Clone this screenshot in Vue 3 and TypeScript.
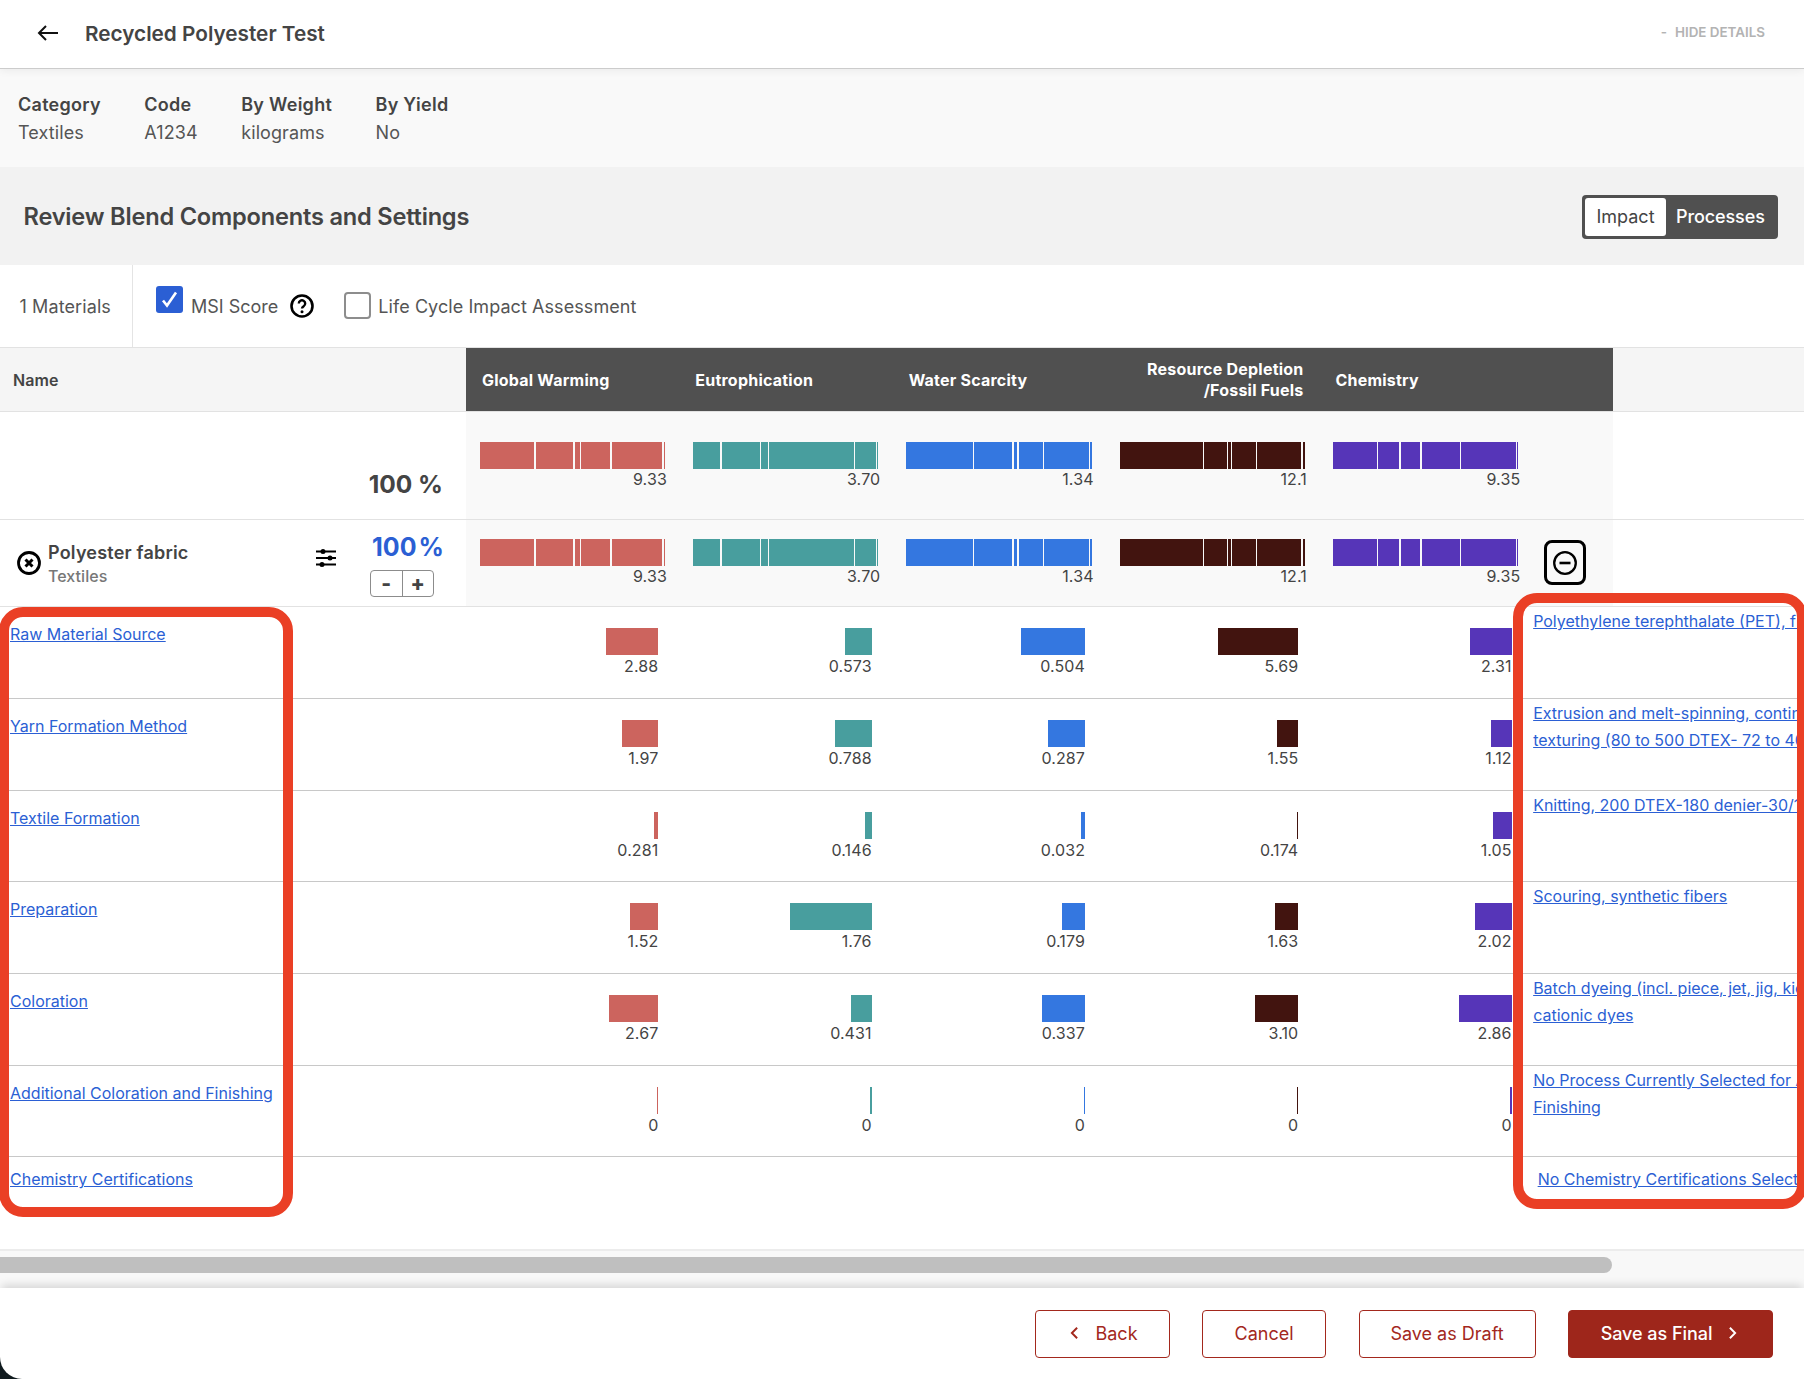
<script setup lang="ts">
type Seg = [number, number]
interface Metric {
  title: string
  stack: Seg[]
  start: number
  total: string
  color: string
  parts: { w: number; v: string }[]
}

const metrics: Metric[] = [
  {
    title: 'Global Warming', start: 480, total: '9.33', color: '#cc645e',
    stack: [[480, 534], [536, 573], [575, 580], [581, 610], [612, 662], [664, 665]],
    parts: [{ w: 52, v: '2.88' }, { w: 36, v: '1.97' }, { w: 4.5, v: '0.281' }, { w: 28, v: '1.52' }, { w: 49, v: '2.67' }, { w: 1, v: '0' }],
  },
  {
    title: 'Eutrophication', start: 693.33, total: '3.70', color: '#489e9e',
    stack: [[692.5, 720], [722, 760], [761, 768], [769, 854], [855, 876], [877, 878]],
    parts: [{ w: 27, v: '0.573' }, { w: 37, v: '0.788' }, { w: 7, v: '0.146' }, { w: 82, v: '1.76' }, { w: 21, v: '0.431' }, { w: 2, v: '0' }],
  },
  {
    title: 'Water Scarcity', start: 906.66, total: '1.34', color: '#3477e0',
    stack: [[905.6, 973], [974, 1012], [1014, 1017], [1019, 1043], [1044, 1089], [1090, 1092]],
    parts: [{ w: 64, v: '0.504' }, { w: 37, v: '0.287' }, { w: 4, v: '0.032' }, { w: 23, v: '0.179' }, { w: 43, v: '0.337' }, { w: 1, v: '0' }],
  },
  {
    title: 'Resource Depletion /Fossil Fuels', start: 1120, total: '12.1', color: '#42140f',
    stack: [[1120, 1203], [1204, 1227], [1228, 1231], [1232, 1256], [1257, 1301.5], [1303.5, 1305]],
    parts: [{ w: 80, v: '5.69' }, { w: 21, v: '1.55' }, { w: 1.5, v: '0.174' }, { w: 23, v: '1.63' }, { w: 43, v: '3.10' }, { w: 1, v: '0' }],
  },
  {
    title: 'Chemistry', start: 1333.33, total: '9.35', color: '#5635b8',
    stack: [[1333, 1377], [1378, 1399], [1401, 1420], [1422, 1460], [1461, 1516], [1517, 1518]],
    parts: [{ w: 42, v: '2.31' }, { w: 21, v: '1.12' }, { w: 19, v: '1.05' }, { w: 37, v: '2.02' }, { w: 53, v: '2.86' }, { w: 2, v: '0' }],
  },
]

const processes: { name: string; lines: string[] }[] = [
  { name: 'Raw Material Source', lines: ['Polyethylene terephthalate (PET), fibers'] },
  { name: 'Yarn Formation Method', lines: ['Extrusion and melt-spinning, continuous', 'texturing (80 to 500 DTEX- 72 to 400'] },
  { name: 'Textile Formation', lines: ['Knitting, 200 DTEX-180 denier-30/1'] },
  { name: 'Preparation', lines: ['Scouring, synthetic fibers'] },
  { name: 'Coloration', lines: ['Batch dyeing (incl. piece, jet, jig, kier)', 'cationic dyes'] },
  { name: 'Additional Coloration and Finishing', lines: ['No Process Currently Selected for Additional', 'Finishing'] },
]

const info = [
  { label: 'Category', value: 'Textiles' },
  { label: 'Code', value: 'A1234' },
  { label: 'By Weight', value: 'kilograms' },
  { label: 'By Yield', value: 'No' },
]

function segStyle(m: Metric, i: number) {
  const [a, b] = m.stack[i]
  const prev = i === 0 ? m.start : m.stack[i - 1][1]
  return { width: `${b - a}px`, marginLeft: `${a - prev}px`, background: m.color }
}
</script>

<template>
  <div class="page">
    <header class="topbar">
      <svg class="back" viewBox="0 0 22 18" width="22" height="18" fill="none" stroke="#111" stroke-width="2">
        <path d="M21 9H2M9 2 2 9l7 7" />
      </svg>
      <h1 class="title">Recycled Polyester Test</h1>
      <span class="hide"><span class="dash">-</span>HIDE DETAILS</span>
    </header>

    <section class="details">
      <div v-for="d in info" :key="d.label" class="detail">
        <strong>{{ d.label }}</strong>
        <span>{{ d.value }}</span>
      </div>
    </section>

    <section class="review">
      <h2>Review Blend Components and Settings</h2>
      <div class="toggle">
        <span class="on">Impact</span>
        <span class="off">Processes</span>
      </div>
    </section>

    <section class="toolbar">
      <div class="count">1 Materials</div>
      <div class="checks">
        <span class="box checked">
          <svg viewBox="0 0 27 27" width="27" height="27" fill="none" stroke="#fff" stroke-width="2.6">
            <path d="M7 14.500l4 5 9-13" />
          </svg>
        </span>
        <span class="msi">MSI Score</span>
        <svg class="help" viewBox="0 0 24 24" width="24" height="24" fill="none" stroke="#000" stroke-width="2.600">
          <circle cx="12" cy="12" r="10.500" />
          <path d="M8.800 9.500a3.200 3.200 0 1 1 4.900 2.700c-1.100.7-1.700 1.300-1.700 2.400" stroke-width="2.400" />
          <circle cx="12" cy="17.800" r="1.500" fill="#000" stroke="none" />
        </svg>
        <span class="box empty"></span>
        <span class="lca">Life Cycle Impact Assessment</span>
      </div>
    </section>

    <section class="table">
      <div class="thead">
        <div class="name-h">Name</div>
        <div class="dark">
          <div class="mh">Global Warming</div>
          <div class="mh">Eutrophication</div>
          <div class="mh">Water Scarcity</div>
          <div class="mh right">Resource Depletion<br />/Fossil Fuels</div>
          <div class="mh">Chemistry</div>
        </div>
      </div>

      <div class="row total">
        <div class="lead"><span class="pct">100 %</span></div>
        <div class="shade">
          <div v-for="m in metrics" :key="m.title" class="mcell">
            <div class="stack">
              <i v-for="(s, i) in m.stack" :key="i" :style="segStyle(m, i)"></i>
            </div>
            <div class="val">{{ m.total }}</div>
          </div>
        </div>
      </div>

      <div class="row material">
        <div class="lead">
          <svg class="remove" viewBox="0 0 24 24" width="24" height="24" fill="none" stroke="#000" stroke-width="2.800">
            <circle cx="12" cy="12" r="10.500" />
            <path d="M8.500 8.500l7 7M15.500 8.500l-7 7" stroke-width="3" />
          </svg>
          <div class="mat">
            <strong>Polyester fabric</strong>
            <span>Textiles</span>
          </div>
          <svg class="sliders" viewBox="0 0 20 20" width="20" height="20" fill="#000" stroke="#000">
            <path d="M0 3.500h20M0 10h20M0 16.500h20" stroke-width="2" />
            <circle cx="7" cy="3.500" r="2.500" stroke="none" />
            <circle cx="14" cy="10" r="2.500" stroke="none" />
            <circle cx="6" cy="16.500" r="2.500" stroke="none" />
          </svg>
          <div class="mix">
            <span class="blue">100<em>%</em></span>
            <div class="stepper"><b>-</b><b>+</b></div>
          </div>
        </div>
        <div class="shade">
          <div v-for="m in metrics" :key="m.title" class="mcell">
            <div class="stack">
              <i v-for="(s, i) in m.stack" :key="i" :style="segStyle(m, i)"></i>
            </div>
            <div class="val">{{ m.total }}</div>
          </div>
          <button class="minus" type="button" aria-label="Remove">
            <svg viewBox="0 0 24 24" width="24" height="24" fill="none" stroke="#000" stroke-width="2.300">
              <circle cx="12" cy="12" r="10.800" />
              <path d="M6.500 12h11" stroke-width="2.600" />
            </svg>
          </button>
        </div>
      </div>

      <div v-for="(p, r) in processes" :key="p.name" class="row proc">
        <div class="lead"><a class="link" href="#">{{ p.name }}</a></div>
        <div v-for="m in metrics" :key="m.title" class="pcell">
          <div class="pbar" :style="{ width: m.parts[r].w + 'px', background: m.color }"></div>
          <div class="pval">{{ m.parts[r].v }}</div>
        </div>
        <div class="procs">
          <a v-for="l in p.lines" :key="l" class="link" href="#">{{ l }}</a>
        </div>
      </div>

      <div class="row proc last">
        <div class="lead"><a class="link" href="#">Chemistry Certifications</a></div>
        <div class="procs cert"><a class="link" href="#">No Chemistry Certifications Selected</a></div>
      </div>

      <div class="scroller"><div class="thumb"></div></div>
    </section>

    <footer class="footer">
      <button class="btn back-btn" type="button">
        <svg viewBox="0 0 10 16" width="9" height="14" fill="none" stroke="currentColor" stroke-width="2.200"><path d="M8 2 2 8l6 6" /></svg>
        Back
      </button>
      <button class="btn cancel" type="button">Cancel</button>
      <button class="btn draft" type="button">Save as Draft</button>
      <button class="btn final" type="button">
        Save as Final
        <svg viewBox="0 0 10 16" width="9" height="14" fill="none" stroke="currentColor" stroke-width="2.200"><path d="M2 2l6 6-6 6" /></svg>
      </button>
    </footer>

    <div class="mark mark-left"></div>
    <div class="mark mark-right"></div>
  </div>
</template>

<style scoped>
.page {
  position: relative;
  width: 1804px;
  height: 1379px;
  overflow: hidden;
  background: #111b1f;
  font-family: Inter, "Liberation Sans", sans-serif;
  color: #444;
  display: flex;
  flex-direction: column;
}
.topbar {
  position: relative;
  z-index: 2;
  height: 69px;
  flex: none;
  box-sizing: border-box;
  background: #fff;
  border-bottom: 1px solid #ccc;
  box-shadow: 0 2px 8px rgba(0, 0, 0, 0.06);
  display: flex;
  align-items: center;
  padding: 0 39px 2px 37px;
}
.title {
  margin: 0 0 0 26px;
  font-size: 20.750px;
  font-weight: 600;
  color: #444;
}
.hide {
  margin-left: auto;
  font-size: 13.400px;
  font-weight: 600;
  color: #b3b3b3;
  margin-top: -3px;
}
.dash { margin-right: 8px; }
.details {
  height: 98px;
  flex: none;
  background: #f9f9f9;
  display: flex;
  box-sizing: border-box;
  padding: 22px 0 0 18px;
  gap: 43.500px;
}
.detail {
  display: flex;
  flex-direction: column;
  font-size: 18px;
  line-height: 28px;
}
.detail strong { font-weight: 600; letter-spacing: 0.27px; }
.detail span { color: #555; letter-spacing: 0.1px; }
.review {
  height: 98px;
  flex: none;
  box-sizing: border-box;
  background: #f2f2f2;
  display: flex;
  align-items: center;
  justify-content: space-between;
  padding: 2px 26px 0 23.500px;
}
.review h2 {
  margin: -2px 0 0;
  font-size: 23.600px;
  font-weight: 600;
  color: #444;
  letter-spacing: -0.2px;
}
.toggle {
  width: 196px;
  height: 44px;
  box-sizing: border-box;
  padding: 3px;
  background: #505050;
  border-radius: 4px;
  display: flex;
  align-items: center;
  font-size: 18px;
}
.on {
  width: 81px;
  height: 38px;
  box-sizing: border-box;
  padding-bottom: 2px;
  background: #fff;
  border-radius: 3px;
  color: #444;
  display: flex;
  align-items: center;
  justify-content: center;
}
.off { color: #fff; margin: 0 0 2px 10px; font-weight: 500; letter-spacing: -0.1px; }
.toolbar {
  height: 82px;
  flex: none;
  background: #fff;
  display: flex;
  font-size: 18px;
}
.count {
  width: 133px;
  box-sizing: border-box;
  border-right: 1px solid #e4e4e4;
  padding: 31px 0 0 19.500px;
  color: #555;
  letter-spacing: 0.1px;
}
.checks {
  display: flex;
  align-items: flex-start;
  padding-left: 23px;
  color: #555;
}
.box {
  display: block;
  width: 27px;
  height: 27px;
  box-sizing: border-box;
  border-radius: 3px;
  flex: none;
}
.checked { background: #2b5fd4; margin-top: 21px; }
.checked svg { display: block; }
.empty { border: 2px solid #8d8d8d; margin: 27px 0 0 30px; border-radius: 4px; }
.msi { margin: 31px 0 0 8px; }
.help { margin: 29px 0 0 12px; flex: none; }
.lca { margin: 31px 0 0 7px; letter-spacing: 0.07px; }
.table {
  flex: 1;
  min-height: 0;
  background: #fff;
  border-top: 1px solid #e2e2e2;
  display: flex;
  flex-direction: column;
}
.thead {
  height: 63px;
  flex: none;
  background: #f5f5f5;
  border-bottom: 1px solid #e2e2e2;
  display: flex;
}
.name-h {
  width: 466px;
  flex: none;
  box-sizing: border-box;
  padding: 22px 0 0 13px;
  font-size: 16px;
  font-weight: 600;
  letter-spacing: 0.1px;
  color: #444;
}
.dark {
  width: 1147px;
  background: #505050;
  color: #fff;
  display: flex;
  align-items: center;
  font-size: 16px;
  font-weight: 700;
  line-height: 21px;
  letter-spacing: 0.22px;
}
.mh {
  width: 213.330px;
  flex: none;
  box-sizing: border-box;
  padding: 2px 0 0 16px;
}
.mh.right {
  text-align: right;
  padding: 0 16px 0 0;
  width: 197.500px;
  margin-left: 16px;
}
.row {
  display: flex;
  flex: none;
  box-sizing: border-box;
}
.lead {
  width: 466px;
  flex: none;
  box-sizing: border-box;
}
.total { height: 108px; border-bottom: 1px solid #e2e2e2; }
.total .lead {
  display: flex;
  justify-content: flex-end;
  padding: 53px 23px 0 0;
}
.pct {
  font-size: 24.500px;
  font-weight: 700;
  line-height: 38px;
  color: #444;
}
.shade {
  position: relative;
  width: 1147px;
  background: #f9f9f9;
  display: flex;
}
.mcell {
  width: 213.330px;
  flex: none;
  box-sizing: border-box;
  padding: 30px 0 0 14px;
  position: relative;
}
.stack {
  display: flex;
  height: 27px;
}
.stack i { display: block; flex: none; }
.val {
  width: 187px;
  text-align: right;
  font-size: 16px;
  line-height: 21px;
  color: #444;
  letter-spacing: 0.15px;
}
.material { height: 87.200px; border-bottom: 1px solid #e2e2e2; }
.material .lead {
  display: flex;
  position: relative;
  padding-left: 17px;
}
.material .mcell { padding-top: 19px; }
.remove { margin-top: 31px; flex: none; }
.mat {
  display: flex;
  flex-direction: column;
  width: 268px;
  flex: none;
  margin-left: 7px;
  padding-top: 20px;
}
.mat strong {
  font-size: 18px;
  line-height: 26px;
  font-weight: 600;
  letter-spacing: 0.2px;
  color: #444;
}
.mat span {
  font-size: 16px;
  line-height: 21px;
  font-weight: 500;
  letter-spacing: 0.05px;
  color: #777;
}
.sliders { margin-top: 28px; flex: none; }
.mix {
  margin-left: 34px;
  display: flex;
  flex-direction: column;
  padding-top: 8px;
}
.blue {
  color: #2b5fd4;
  font-size: 25px;
  font-weight: 700;
  line-height: 38px;
  padding-left: 2px;
}
.blue em { font-style: normal; margin-left: 2px; }
.stepper {
  width: 64px;
  height: 27px;
  box-sizing: border-box;
  border: 1px solid #8c8c8c;
  border-radius: 4px;
  margin-top: 4px;
  display: flex;
  background: #fff;
}
.stepper b {
  flex: 1;
  display: flex;
  align-items: center;
  justify-content: center;
  font-size: 21px;
  font-weight: 800;
  line-height: 1;
  color: #444;
}
.stepper b + b { border-left: 1px solid #8c8c8c; }
.minus {
  position: absolute;
  left: 1078px;
  top: 20px;
  width: 42px;
  height: 45px;
  box-sizing: border-box;
  padding: 0;
  background: #f9f9f9;
  border: 3px solid #000;
  border-radius: 8px;
  display: flex;
  align-items: center;
  justify-content: center;
}
.proc { height: 91.700px; border-bottom: 1px solid #c8c8c8; background: #fff; }
.proc .lead { padding: 15px 0 0 10px; }
.last .lead { padding-top: 10px; }
.link {
  color: #2b5fd4;
  font-size: 16px;
  line-height: 24px;
  text-decoration: underline;
  white-space: nowrap;
}
.pcell {
  width: 213.330px;
  flex: none;
  box-sizing: border-box;
  padding: 21px 21px 0 0;
  display: flex;
  flex-direction: column;
  align-items: flex-end;
}
.pbar { height: 27px; flex: none; }
.pval {
  font-size: 16px;
  line-height: 22px;
  color: #444;
  letter-spacing: 0.1px;
}
.procs {
  flex: 1;
  min-width: 0;
  overflow: hidden;
  display: flex;
  flex-direction: column;
  margin-left: -1px;
  padding: 1px 0 0 1.500px;
}
.procs .link { line-height: 27px; }
.cert { margin-left: 1066.650px; padding: 9px 0 0 5px !important; }
.last { border-bottom: 0; height: 92px; }
.scroller {
  flex: 1;
  min-height: 0;
  box-sizing: border-box;
  background: #f8f8f8;
  border-top: 2px solid #ececec;
  padding-top: 6px;
}
.thumb {
  width: 1612px;
  height: 16px;
  background: #bfbfbf;
  border-radius: 0 8px 8px 0;
}
.footer {
  height: 91px;
  flex: none;
  box-sizing: border-box;
  background: #fff;
  border-radius: 0 0 0 22px;
  box-shadow: 0 -5px 9px -2px rgba(0, 0, 0, 0.14);
  position: relative;
  display: flex;
  justify-content: flex-end;
  gap: 32.500px;
  padding: 22px 31px 0 0;
}
.btn {
  height: 48px;
  box-sizing: border-box;
  background: #fff;
  border: 1.500px solid #a3281d;
  border-radius: 4px;
  color: #a3281d;
  font-family: inherit;
  font-size: 18px;
  display: flex;
  align-items: center;
  justify-content: center;
  gap: 16px;
  padding: 0 0 2px;
}
.back-btn { width: 135px; padding-left: 4px; }
.cancel { width: 124px; }
.draft { width: 177px; }
.final {
  width: 205px;
  background: #9e261b;
  border-color: #9e261b;
  color: #fff;
  font-weight: 500;
  letter-spacing: -0.05px;
  padding-right: 3px;
}
.mark {
  position: absolute;
  box-sizing: border-box;
  border: 10px solid #ea3f25;
  border-radius: 24px;
  z-index: 3;
}
.mark-left { left: -1px; top: 607px; width: 294px; height: 610px; }
.mark-right { left: 1513px; top: 593px; width: 294px; height: 616px; }
</style>
